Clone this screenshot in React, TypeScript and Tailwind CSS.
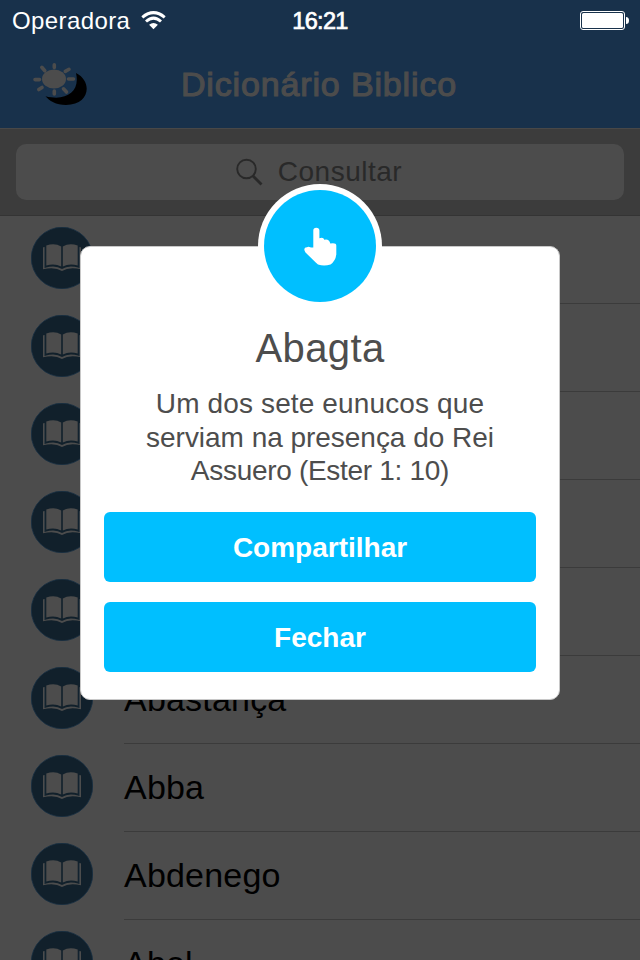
const rows = ["", "", "", "", "", "Abastança", "Abba", "Abdenego", "Abel"];

function BookBadge() {
  return (
    <svg className="block shrink-0" width="62" height="62" viewBox="0 0 62 62">
      <circle cx="31" cy="31" r="30.7" fill="#11202b" stroke="#172f42" strokeWidth="0.8" />
      <path
        d="M12 20.300H14V40.700Q24.500 37.600 31 41.900Q37.500 37.600 48 40.700V20.300H50V42.300Q38.500 39.400 31 43.900Q23.500 39.400 12 42.300Z"
        fill="#4c4c4c"
      />
      <path d="M13.900 20.300V41" stroke="#172a38" strokeWidth="0.8" />
      <path d="M48.100 20.300V41" stroke="#172a38" strokeWidth="0.8" />
      <path
        d="M15.300 18.600Q23.500 15.600 30.200 19.400V39.600Q23.500 35.900 15.300 38.600ZM46.700 18.600Q38.500 15.600 31.800 19.400V39.600Q38.500 35.900 46.700 38.600Z"
        fill="#4c4c4c"
      />
    </svg>
  );
}

function SunMoon() {
  return (
    <svg className="block" width="56" height="44" viewBox="0 0 56 44">
      <path d="M44 10C60.500 18 58.500 41.800 34 42C24 42 17 37.500 13.500 33.200C34 38.500 48.500 29 44 10Z" fill="#000" />
      <g stroke="#4c4c4c" strokeWidth="3.6" strokeLinecap="round">
        <path d="M22.300 1.800V4.500M22.300 28V31M3 16.600H7.500M36.500 16H41.500M9.800 4.300L12.800 7.700M33.300 8.400L37 6.300M6.800 26.500L10 24.400M31.500 25.800L34.500 29" />
      </g>
      <ellipse cx="22" cy="16" rx="12" ry="9.500" fill="#4c4c4c" />
    </svg>
  );
}

function Wifi() {
  return (
    <svg className="block" width="26" height="20" viewBox="0 0 26 20">
      <g fill="none" stroke="#fff" strokeWidth="3">
        <path d="M1.300 6.300Q12.500 -3 23.700 6.300" />
        <path d="M5 10.500Q12.500 3.800 20 10.500" />
      </g>
      <path d="M8.100 13.800Q12.500 10.200 16.900 13.800L12.500 18.200Z" fill="#fff" />
    </svg>
  );
}

function Battery() {
  return (
    <svg className="block" width="50" height="20" viewBox="0 0 50 20">
      <rect x="0.500" y="0.500" width="44" height="18" rx="2.500" fill="none" stroke="#fff" />
      <rect x="2" y="2" width="41" height="15" rx="1.500" fill="#fff" />
      <path d="M46 6Q49 6 49 9.500T46 13Z" fill="#fff" />
    </svg>
  );
}

function Hand() {
  return (
    <svg className="mt-0.5 ml-px block" width="34" height="40" viewBox="0 0 34 40">
      <path
        d="M9.300 3.500Q9.300 0.800 12.300 0.800T15.400 3.500V11.200Q19.500 9.800 20.300 12.800Q25 11.500 26.300 16.500Q32.300 15.500 32.300 18.500V27.500Q31.500 34 26.500 37.500Q20 39.500 14 37.500L12 35.800L1.500 25.500Q-1.500 20.500 3 20.200Q4 19.300 7 20.400L9.300 20.600Z"
        fill="#fff"
      />
    </svg>
  );
}

export default function App() {
  return (
    <div className="relative h-[960px] w-[640px] overflow-hidden bg-[#4c4c4c] font-['Liberation_Sans',Arial,sans-serif] whitespace-nowrap">
      <header className="h-32 bg-[#18314b]">
        <div className="grid h-10 grid-cols-3 items-start text-white">
          <div className="flex pl-3">
            <span className="pt-[5px] text-[24px] leading-8 tracking-[0.4px]">Operadora</span>
            <div className="pt-[11px] pl-[11px]"><Wifi /></div>
          </div>
          <span className="pt-[5px] text-center text-[23.5px] leading-8 tracking-[-0.7px] [-webkit-text-stroke:0.7px_#fff]">16:21</span>
          <div className="flex justify-end pt-[11px] pr-[10px]"><Battery /></div>
        </div>
        <div className="grid h-[88px] grid-cols-[112px_416px_112px]">
          <div className="pt-[23px] pl-8"><SunMoon /></div>
          <h1 className="pt-[24px] pr-[2px] text-center text-[34px] leading-10 tracking-[0.85px] text-[#4c4c4c] [-webkit-text-stroke:1.2px_#4c4c4c]">Dicionário Biblico</h1>
        </div>
      </header>
      <div className="h-[88px] border-t border-b border-t-[#484848] border-b-[#343434] bg-[#3c3c3c] px-4 pt-[15px]">
        <div className="flex h-14 items-center justify-center rounded-[10px] bg-[#4c4c4c] pr-[2px] text-[#292929]">
          <svg className="mr-[15px] block" width="27" height="28" viewBox="0 0 27 28" fill="none" stroke="currentColor">
            <circle cx="10.500" cy="11" r="9.300" strokeWidth="1.900" />
            <path d="M17 18L25.500 26.500" strokeWidth="2.800" />
          </svg>
          <span className="text-[28px] leading-8 tracking-[0.5px]">Consultar</span>
        </div>
      </div>
      <main>
        {rows.map((label, i) => (
          <div key={i} className="flex h-[88px] pl-[31px]">
            <div className="pt-[11px]"><BookBadge /></div>
            <div className="ml-[31px] flex-1 border-b border-[#3b3b3b] pt-[23px] text-[34px] leading-10 tracking-[0.2px] text-black">{label}</div>
          </div>
        ))}
      </main>
      <section className="absolute top-[246px] left-20 flex h-[454px] w-[480px] flex-col rounded-[10px] border border-[#c8c8c8] bg-white px-[23px] text-center text-[#4d4d4d]">
        <div className="absolute top-[-63px] left-[177px] flex size-[124px] items-center justify-center rounded-full bg-white">
          <div className="flex size-28 items-center justify-center rounded-full bg-[#00bfff]"><Hand /></div>
        </div>
        <h2 className="mt-[77px] text-[40px] leading-[48px] tracking-[0.4px]">Abagta</h2>
        <p className="mt-[15px] text-[28px] leading-[33.5px]">
          <span className="block tracking-[0.13px]">Um dos sete eunucos que</span>
          <span className="block tracking-[-0.03px]">serviam na presença do Rei</span>
          <span className="block tracking-[-0.3px]">Assuero (Ester 1: 10)</span>
        </p>
        <div className="absolute top-[265px] left-[23px] flex w-[432px] flex-col gap-5 text-[28px] font-bold text-white">
          <button className="h-[70px] rounded-md bg-[#00bfff] pt-px">Compartilhar</button>
          <button className="h-[70px] rounded-md bg-[#00bfff] pt-px">Fechar</button>
        </div>
      </section>
    </div>
  );
}
